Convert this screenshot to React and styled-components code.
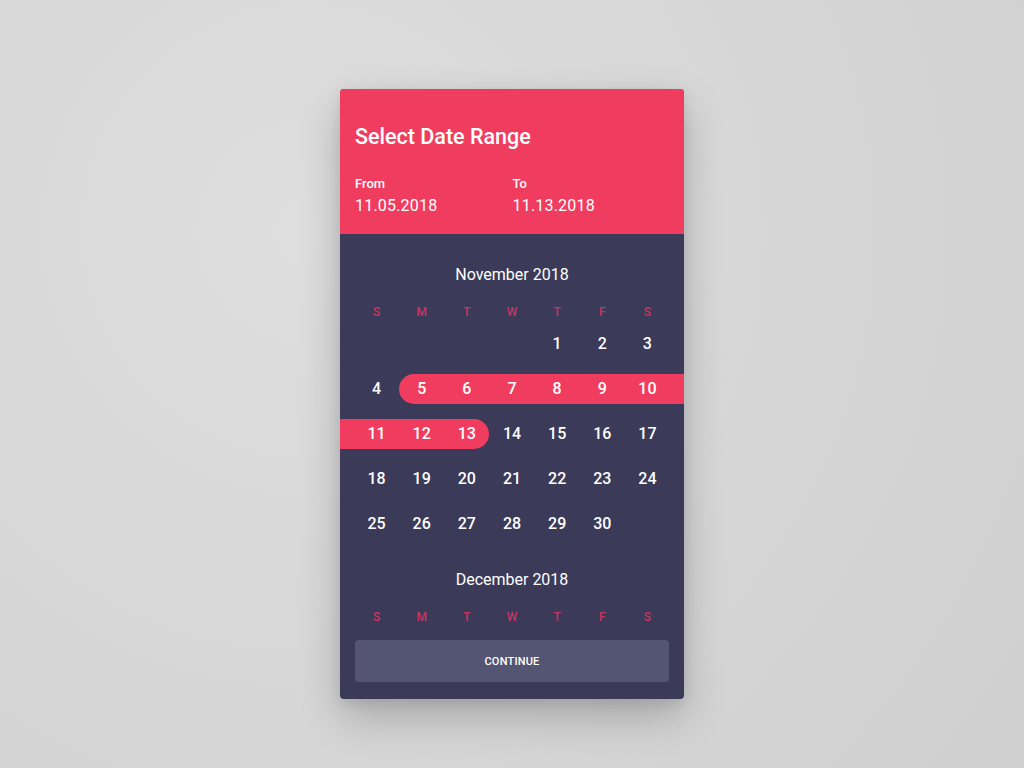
import styled, { createGlobalStyle } from "styled-components";

const PINK = "#f03d5f";
const DARK = "#3b3a59";

const GlobalStyle = createGlobalStyle`
  html, body {
    margin: 0;
    padding: 0;
  }
  body {
    font-family: Roboto, "Noto Sans", Arial, sans-serif;
    background: radial-gradient(circle at 30% 30%, #dedede 0%, #d6d6d6 55%, #cfcfcf 100%);
    min-height: 100vh;
  }
`;

const WEEKDAYS = ["S", "M", "T", "W", "T", "F", "S"];

// November 2018 starts on Thursday
const november = [
  [null, null, null, null, 1, 2, 3],
  [4, 5, 6, 7, 8, 9, 10],
  [11, 12, 13, 14, 15, 16, 17],
  [18, 19, 20, 21, 22, 23, 24],
  [25, 26, 27, 28, 29, 30, null],
];

const RANGE_START = 5;
const RANGE_END = 13;

const App = () => {
  return (
    <>
      <GlobalStyle />
      <Page>
        <Card>
          <Header>
            <Title>Select Date Range</Title>
            <Dates>
              <DateBlock>
                <DateLabel>From</DateLabel>
                <DateValue>11.05.2018</DateValue>
              </DateBlock>
              <DateBlock>
                <DateLabel>To</DateLabel>
                <DateValue>11.13.2018</DateValue>
              </DateBlock>
            </Dates>
          </Header>

          <Body>
            <Scroll>
              <Month>
                <MonthTitle>November 2018</MonthTitle>
                <WeekdayRow>
                  {WEEKDAYS.map((d, i) => (
                    <Weekday key={i}>{d}</Weekday>
                  ))}
                </WeekdayRow>
                {november.map((week, wi) => (
                  <Week key={wi}>
                    {week.map((day, di) => {
                      const inRange =
                        day !== null && day >= RANGE_START && day <= RANGE_END;
                      return (
                        <Day
                          key={di}
                          $inRange={inRange}
                          $start={day === RANGE_START}
                          $end={day === RANGE_END}
                          $bleedLeft={inRange && di === 0 && day !== RANGE_START}
                          $bleedRight={inRange && di === 6 && day !== RANGE_END}
                        >
                          {day}
                        </Day>
                      );
                    })}
                  </Week>
                ))}
              </Month>

              <Month $next>
                <MonthTitle>December 2018</MonthTitle>
                <WeekdayRow>
                  {WEEKDAYS.map((d, i) => (
                    <Weekday key={i}>{d}</Weekday>
                  ))}
                </WeekdayRow>
              </Month>
            </Scroll>

            <Footer>
              <ContinueButton type="button">CONTINUE</ContinueButton>
            </Footer>
          </Body>
        </Card>
      </Page>
    </>
  );
};

export default App;

// Styled Components
const Page = styled.div`
  display: flex;
  justify-content: center;
  padding-top: 89px;
  min-height: 100vh;
  box-sizing: border-box;
`;

const Card = styled.div`
  width: 344px;
  height: 610px;
  border-radius: 4px;
  overflow: hidden;
  display: flex;
  flex-direction: column;
  background: ${DARK};
  box-shadow: 0 18px 40px rgba(0, 0, 0, 0.22), 0 4px 12px rgba(0, 0, 0, 0.08);
`;

const Header = styled.div`
  background: ${PINK};
  color: #fff;
  padding: 36px 15px 18px 15px;
`;

const Title = styled.div`
  font-size: 21.5px;
  line-height: 24px;
  font-weight: 500;
  margin-bottom: 27px;
`;

const Dates = styled.div`
  display: flex;
`;

const DateBlock = styled.div`
  width: 158px;
  display: flex;
  flex-direction: column;
  gap: 4px;

  & + & {
    padding-left: 1px;
  }
`;

const DateLabel = styled.div`
  font-size: 13px;
  line-height: 16px;
  font-weight: 500;
`;

const DateValue = styled.div`
  font-size: 16px;
  line-height: 20px;
  font-weight: 400;
  letter-spacing: 0.2px;
`;

const Body = styled.div`
  flex: 1;
  display: flex;
  flex-direction: column;
  min-height: 0;
`;

const Scroll = styled.div`
  flex: 1;
  overflow: hidden;
  padding-top: 31px;
`;

const Month = styled.div`
  padding: 0 14px;
  margin-top: ${(p) => (p.$next ? "24px" : "0")};
`;

const MonthTitle = styled.div`
  text-align: center;
  color: #fff;
  font-size: 16px;
  line-height: 20px;
  font-weight: 400;
  margin-bottom: 18px;
`;

const WeekdayRow = styled.div`
  display: grid;
  grid-template-columns: repeat(7, 1fr);
  height: 18px;
  align-items: center;
`;

const Weekday = styled.div`
  text-align: center;
  color: #cc3460;
  font-size: 12px;
  font-weight: 500;
`;

const Week = styled.div`
  display: grid;
  grid-template-columns: repeat(7, 1fr);
  height: 45px;
  align-items: center;
`;

const Day = styled.div`
  height: 30px;
  display: flex;
  align-items: center;
  justify-content: center;
  color: #fff;
  font-size: 16px;
  font-weight: 500;
  background: ${(p) => (p.$inRange ? PINK : "transparent")};
  border-radius: ${(p) =>
    p.$start ? "15px 0 0 15px" : p.$end ? "0 15px 15px 0" : "0"};
  box-shadow: ${(p) =>
    p.$bleedRight
      ? `14px 0 0 ${PINK}`
      : p.$bleedLeft
      ? `-14px 0 0 ${PINK}`
      : "none"};
`;

const Footer = styled.div`
  padding: 0 15px 17px;
`;

const ContinueButton = styled.button`
  width: 100%;
  height: 42px;
  border: none;
  border-radius: 4px;
  background: #545573;
  color: #fff;
  font-family: Roboto, "Noto Sans", Arial, sans-serif;
  font-size: 11px;
  font-weight: 500;
  letter-spacing: 0.2px;
  cursor: pointer;
`;
